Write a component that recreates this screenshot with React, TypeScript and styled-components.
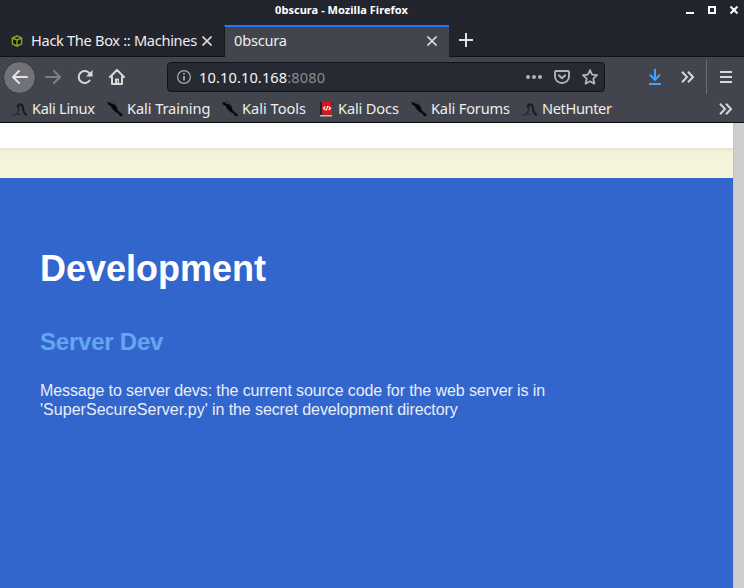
import React from "react";
import styled, { createGlobalStyle } from "styled-components";

const GlobalStyle = createGlobalStyle`
  * { box-sizing: border-box; }
  html, body { margin: 0; padding: 0; overflow: hidden; }
  svg { display: block; flex: none; }
`;

const Window = styled.div`
  width: 744px;
  height: 588px;
  display: flex;
  flex-direction: column;
  overflow: hidden;
  background: #22252e;
  font-family: "Noto Sans", sans-serif;
  font-size: 14.6px;
  color: #eeeeec;
`;

const TitleBar = styled.header`
  height: 25px;
  flex: none;
  display: flex;
  align-items: flex-start;
`;

const WindowTitle = styled.div`
  width: 683px;
  text-align: center;
  font-size: 11px;
  font-weight: 700;
  line-height: 15px;
  padding-top: 2px;
  letter-spacing: 0.04px;
  color: #ffffff;
  white-space: nowrap;
`;

const WindowControls = styled.div`
  display: flex;
  padding: 6px 0 0 3px;
  gap: 14px;
`;

const TabStrip = styled.nav`
  height: 32px;
  flex: none;
  display: flex;
  border-bottom: 1px solid #101218;
`;

const Tab = styled.div<{ $active?: boolean }>`
  width: ${(p) => (p.$active ? 225 : 224)}px;
  height: 32px;
  display: flex;
  align-items: center;
  padding: ${(p) => (p.$active ? "0 12px 2px 9px" : "0 12px 0 11px")};
  border-top: ${(p) => (p.$active ? "2px solid #2277ff" : "0")};
  border-left: ${(p) => (p.$active ? "1px solid #171920" : "0")};
  background: ${(p) => (p.$active ? "#42454d" : "transparent")};
`;

const TabTitle = styled.span<{ $spacing: number }>`
  flex: 1;
  min-width: 0;
  padding-bottom: 2px;
  white-space: nowrap;
  letter-spacing: ${(p) => p.$spacing}px;
`;

const TabIcon = styled.span`
  width: 20px;
  flex: none;
`;

const NewTab = styled.div`
  display: flex;
  padding: 8px 0 0 10px;
`;

const Toolbar = styled.div`
  height: 40px;
  flex: none;
  display: flex;
  align-items: center;
  background: #42454d;
  padding-left: 4px;
`;

const NavButtons = styled.div`
  width: 163px;
  display: flex;
  align-items: center;
  gap: 16px;
`;

const BackButton = styled.div`
  width: 33px;
  height: 33px;
  flex: none;
  margin: 0 -7px 0 -1px;
  display: grid;
  place-items: center;
  border-radius: 50%;
  border: 1px solid #33353b;
  background: #717277;
`;

const AddressBar = styled.div`
  width: 438px;
  height: 30px;
  flex: none;
  display: flex;
  align-items: center;
  padding: 0 6px 0 8px;
  background: #272933;
  border: 1px solid #111319;
  border-radius: 4px;
`;

const Address = styled.div`
  flex: 1;
  padding-left: 7px;
  letter-spacing: 0.12px;
  color: #f5f5f6;
`;

const Port = styled.span`
  color: #8b8c91;
`;

const AddressActions = styled.div`
  display: flex;
  align-items: center;
  gap: 12px;
`;

const ToolbarEnd = styled.div`
  flex: 1;
  height: 100%;
  display: flex;
  align-items: center;
  padding-left: 44px;
`;

const Downloads = styled.div`
  margin-right: 20px;
`;

const Separator = styled.div`
  width: 1px;
  height: 34px;
  margin: 0 13px 0 12px;
  background: #6b6d73;
`;

const BookmarksBar = styled.div`
  height: 26px;
  flex: none;
  display: flex;
  align-items: center;
  background: #42454d;
  border-bottom: 1px solid #0c0c11;
  padding: 0 12px 2px 12px;
`;

const Bookmark = styled.div<{ $width: number; $spacing: number }>`
  width: ${(p) => p.$width}px;
  flex: none;
  display: flex;
  align-items: center;
  gap: 4px;
  white-space: nowrap;
  letter-spacing: ${(p) => p.$spacing}px;
`;

const BookmarkLabel = styled.span`
  padding-bottom: 2px;
`;

const Overflow = styled.div`
  margin-left: auto;
`;

const Viewport = styled.main`
  flex: 1;
  min-height: 0;
  display: flex;
  font-family: "Liberation Sans", Arial, sans-serif;
`;

const Page = styled.div`
  flex: 1;
  display: flex;
  flex-direction: column;
  background: #f4f4dc;
`;

const PageHeader = styled.div`
  height: 25px;
  flex: none;
  background: #ffffff;
  box-shadow: 0 1px 5px rgba(0, 0, 0, 0.1);
  margin-bottom: 30px;
`;

const Section = styled.section`
  flex: 1;
  background: #3366cc;
  padding: 71px 40px 0;
`;

const Heading = styled.h1`
  margin: 0;
  font-size: 36px;
  line-height: 40px;
  color: #ffffff;
`;

const Subheading = styled.h2`
  margin: 39px 0 0;
  font-size: 24px;
  line-height: 28px;
  letter-spacing: -0.22px;
  color: #63a7ee;
`;

const Message = styled.p`
  width: 520px;
  margin: 25px 0 0;
  font-size: 16px;
  line-height: 19px;
  letter-spacing: -0.1px;
  color: #e8eefa;
`;

const FileName = styled.span`
  letter-spacing: 0.03px;
`;

const Scrollbar = styled.div`
  width: 11px;
  flex: none;
  background: #cdcdcd;
  border-left: 1px solid #c4c4c4;
`;

const CloseIcon = () => (
  <svg width="10" height="10" viewBox="0 0 10 10" stroke="#d8d8d6" strokeWidth="1.6">
    <path d="M.5.5l9 9M9.5.5l-9 9" />
  </svg>
);

const CubeIcon = () => (
  <svg width="12" height="12" viewBox="0 0 12 12" fill="#12150f" stroke="#86ab1d" strokeWidth="1.400" strokeLinejoin="round">
    <path d="M6 1l4.600 1.800v6L6 11 1.400 8.800v-6zM1.400 3L6 5l4.600-2M6 5v6" />
  </svg>
);

const Arrow = ({ color, flip }: { color: string; flip?: boolean }) => (
  <svg width="16" height="16" viewBox="0 0 16 16" fill="none" stroke={color} strokeWidth="2" strokeLinecap="round" strokeLinejoin="round">
    <path d={flip ? "M1 8h14M9 2l6 6-6 6" : "M15 8H1M7 2L1 8l6 6"} />
  </svg>
);

const ReloadIcon = () => (
  <svg width="16" height="16" viewBox="0 0 16 16" fill="none" stroke="#d9d9d8" strokeWidth="2">
    <path d="M12.600 11.500A6 6 0 1 1 12.400 4.300" strokeLinecap="round" />
    <path d="M15.500 1v6.500H9z" fill="#d9d9d8" stroke="none" />
  </svg>
);

const HomeIcon = () => (
  <svg width="16" height="16" viewBox="0 0 16 16" fill="none" stroke="#d9d9d8" strokeWidth="2" strokeLinejoin="round" strokeLinecap="round">
    <path d="M1 8l7-7 7 7M3 8v7h10V8" />
    <path d="M6.500 15v-5h3v5z" fill="#d9d9d8" strokeWidth="1" />
    <path d="M8.500 12v1" stroke="#42454d" strokeWidth="1" />
  </svg>
);

const InfoIcon = () => (
  <svg width="16" height="16" viewBox="0 0 16 16" fill="none" stroke="#a8a9ac" strokeWidth="1.300">
    <circle cx="8" cy="8" r="6.400" />
    <path d="M8 7v4.500M8 4v1.600" strokeWidth="1.800" />
  </svg>
);

const DotsIcon = () => (
  <svg width="16" height="16" viewBox="0 0 16 16" fill="#b3b4b6">
    <circle cx="2" cy="8" r="2" />
    <circle cx="8" cy="8" r="2" />
    <circle cx="14" cy="8" r="2" />
  </svg>
);

const PocketIcon = () => (
  <svg width="16" height="16" viewBox="0 0 16 16" fill="none" stroke="#b3b4b6" strokeWidth="1.900" strokeLinejoin="round" strokeLinecap="round">
    <path d="M2 2h12a1 1 0 0 1 1 1v4.500a7 6.500 0 0 1-14 0V3a1 1 0 0 1 1-1z" />
    <path d="M4.800 6.300L8 9.300l3.200-3" />
  </svg>
);

const StarIcon = () => (
  <svg width="16" height="16" viewBox="0 0 16 16" fill="none" stroke="#b3b4b6" strokeWidth="1.800" strokeLinejoin="round">
    <path d="M8 1l2.100 4.700 5 .5-3.800 3.500 1.100 5L8 12.200l-4.400 2.500 1.100-5L.9 6.200l5-.5z" />
  </svg>
);

const DownloadIcon = () => (
  <svg width="12" height="16" viewBox="0 0 12 16" fill="none" stroke="#45a1ff" strokeWidth="2">
    <path d="M6 0v10M1 5.800l5 5 5-5M0 15h12" />
  </svg>
);

const ChevronsIcon = () => (
  <svg width="13" height="12" viewBox="0 0 13 12" fill="none" stroke="#d5d5d4" strokeWidth="2">
    <path d="M1 .8L6 6l-5 5.200M7 .8L12 6l-5 5.200" />
  </svg>
);

const MenuIcon = () => (
  <svg width="12" height="12" viewBox="0 0 12 12" stroke="#d9d9d8" strokeWidth="2">
    <path d="M0 1h12M0 6h12M0 11h12" />
  </svg>
);

const DragonIcon = () => (
  <svg width="16" height="16" viewBox="0 0 16 16" fill="none" stroke="#191b1f" strokeLinecap="round">
    <path d="M5.500 5.500C6.500 3 9.500 2.500 10.500 5c.8 2 0 4.500 1.700 6.500.8 1 1.500 1.700 2 2.300" strokeWidth="2.100" />
    <path d="M7.500 6c-1.500 2-.5 4-2.500 6.200" stroke="#26282d" strokeWidth="1.500" />
    <path d="M1 14.200c2-1 3.500-.7 7-.9" stroke="#2a2c31" strokeWidth="1.300" />
  </svg>
);

const DaggerIcon = () => (
  <svg width="16" height="16" viewBox="0 0 16 16" fill="#08080a">
    <path d="M0 1l3 .5L5 3l2 .3L9 5l1 1.500.5 2.500 2 2 3.500 2.800-1 1.700-2.700-1.300-1-2-2.500-1L6.500 9 4.500 7 4 5 1.500 4z" />
    <path d="M4 .5l3.500 1.800 2 2.500" fill="none" stroke="#292b30" strokeWidth=".8" />
  </svg>
);

const BookIcon = () => (
  <svg width="16" height="16" viewBox="0 0 16 16">
    <path d="M2 1h2v13H2z" fill="#19243f" />
    <path d="M4 1h10v12.500H4z" fill="#dc1616" />
    <path d="M13 1h1v3h-1z" fill="#5c2025" />
    <path d="M2 14h12v1.500H2z" fill="#c8bdb9" />
    <path d="M7.300 5.500L5.500 7.300l2 1.700M10.500 5.500l2 1.700-1.700 1.800M9.700 5L8.300 9.500" fill="none" stroke="#fff" strokeWidth="1.100" />
  </svg>
);

const icons = { dragon: DragonIcon, dagger: DaggerIcon, book: BookIcon };

const bookmarks: {
  label: string;
  icon: keyof typeof icons;
  width: number;
  spacing: number;
}[] = [
  { label: "Kali Linux", icon: "dragon", width: 95, spacing: -0.3 },
  { label: "Kali Training", icon: "dagger", width: 115, spacing: -0.08 },
  { label: "Kali Tools", icon: "dagger", width: 96, spacing: 0 },
  { label: "Kali Docs", icon: "book", width: 93, spacing: -0.14 },
  { label: "Kali Forums", icon: "dagger", width: 111, spacing: -0.16 },
  { label: "NetHunter", icon: "dragon", width: 100, spacing: -0.38 },
];

export default function App() {
  return (
    <Window>
      <GlobalStyle />
      <TitleBar>
        <WindowTitle>0bscura - Mozilla Firefox</WindowTitle>
        <WindowControls>
          <svg width="8" height="8" viewBox="0 0 8 8" fill="#fff"><path d="M0 6h8v2H0z" /></svg>
          <svg width="8" height="8" viewBox="0 0 8 8" fill="none" stroke="#fff" strokeWidth="2"><path d="M1 1h6v6H1z" /></svg>
          <svg width="8" height="8" viewBox="0 0 8 8" stroke="#fff" strokeWidth="2"><path d="M.5.5l7 7M7.500.5l-7 7" /></svg>
        </WindowControls>
      </TitleBar>
      <TabStrip>
        <Tab>
          <TabIcon><CubeIcon /></TabIcon>
          <TabTitle $spacing={-0.31}>Hack The Box :: Machines</TabTitle>
          <CloseIcon />
        </Tab>
        <Tab $active>
          <TabTitle $spacing={-0.22}>0bscura</TabTitle>
          <CloseIcon />
        </Tab>
        <NewTab>
          <svg width="14" height="14" viewBox="0 0 14 14" stroke="#e2e2e0" strokeWidth="2"><path d="M7 0v14M0 7h14" /></svg>
        </NewTab>
      </TabStrip>
      <Toolbar>
        <NavButtons>
          <BackButton><Arrow color="#e4e4e2" /></BackButton>
          <Arrow color="#7e8085" flip />
          <ReloadIcon />
          <HomeIcon />
        </NavButtons>
        <AddressBar>
          <InfoIcon />
          <Address>10.10.10.168<Port>:8080</Port></Address>
          <AddressActions>
            <DotsIcon />
            <PocketIcon />
            <StarIcon />
          </AddressActions>
        </AddressBar>
        <ToolbarEnd>
          <Downloads><DownloadIcon /></Downloads>
          <ChevronsIcon />
          <Separator />
          <MenuIcon />
        </ToolbarEnd>
      </Toolbar>
      <BookmarksBar>
        {bookmarks.map(({ label, icon, width, spacing }) => {
          const Icon = icons[icon];
          return (
            <Bookmark key={label} $width={width} $spacing={spacing}>
              <Icon />
              <BookmarkLabel>{label}</BookmarkLabel>
            </Bookmark>
          );
        })}
        <Overflow><ChevronsIcon /></Overflow>
      </BookmarksBar>
      <Viewport>
        <Page>
          <PageHeader />
          <Section>
            <Heading>Development</Heading>
            <Subheading>Server Dev</Subheading>
            <Message>
              Message to server devs: the current source code for the web server is in{" "}
              <FileName>'SuperSecureServer.py'</FileName> in the secret development directory
            </Message>
          </Section>
        </Page>
        <Scrollbar />
      </Viewport>
    </Window>
  );
}
